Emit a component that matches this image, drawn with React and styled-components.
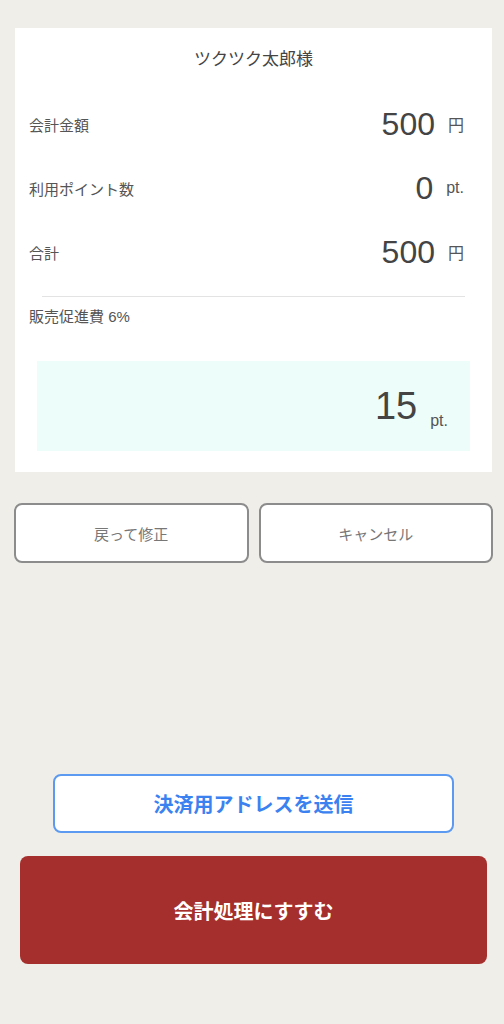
import React from 'react';
import styled, { createGlobalStyle } from 'styled-components';

const GlobalStyle = createGlobalStyle`
  html, body {
    margin: 0;
    padding: 0;
    background: #efeee9;
  }
  body {
    font-family: "Liberation Sans", "Noto Sans CJK JP", sans-serif;
    color: #444;
  }
`;

const rows = [
  { label: '会計金額', value: '500', unit: '円' },
  { label: '利用ポイント数', value: '0', unit: 'pt.' },
  { label: '合計', value: '500', unit: '円' }
];

const App = () => {
  return (
    <Page>
      <GlobalStyle />
      <Card>
        <Title>ツクツク太郎様</Title>
        {rows.map((row) => (
          <Row key={row.label}>
            <Label>{row.label}</Label>
            <Value>
              <Number>{row.value}</Number>
              <Unit>{row.unit}</Unit>
            </Value>
          </Row>
        ))}
        <Divider />
        <FeeLabel>販売促進費 6%</FeeLabel>
        <PointBox>
          <BigNumber>15</BigNumber>
          <SmallUnit>pt.</SmallUnit>
        </PointBox>
      </Card>
      <ButtonRow>
        <OutlineButton>戻って修正</OutlineButton>
        <OutlineButton>キャンセル</OutlineButton>
      </ButtonRow>
      <SendButton>決済用アドレスを送信</SendButton>
      <PrimaryButton>会計処理にすすむ</PrimaryButton>
    </Page>
  );
};
export default App;

const Page = styled.div`
  width: 504px;
  height: 1024px;
  box-sizing: border-box;
  padding: 28px 11px 0 14px;
  display: flex;
  flex-direction: column;
  overflow: hidden;
`;

const Card = styled.div`
  background: #fff;
  margin: 0 1px;
  padding: 0 0 21px;
  display: flex;
  flex-direction: column;
`;

const Title = styled.div`
  height: 64px;
  line-height: 64px;
  text-align: center;
  font-size: 17px;
  color: #444;
`;

const Row = styled.div`
  height: 64px;
  padding: 0 28px 0 14px;
  display: flex;
  align-items: center;
  justify-content: space-between;
`;

const Label = styled.span`
  font-size: 15px;
  color: #555;
`;

const Value = styled.span`
  display: flex;
  align-items: center;
`;

const Number = styled.span`
  font-size: 32px;
  line-height: 36px;
  color: #444;
`;

const Unit = styled.span`
  font-size: 16px;
  color: #555;
  margin-left: 13px;
`;

const Divider = styled.div`
  height: 1px;
  background: #e3e3e3;
  margin: 12px 27px 0;
`;

const FeeLabel = styled.div`
  font-size: 15px;
  line-height: 20px;
  color: #555;
  margin: 10px 14px 0;
`;

const PointBox = styled.div`
  background: #edfdf9;
  margin: 34px 22px 0;
  height: 90px;
  padding-right: 22px;
  display: flex;
  align-items: center;
  justify-content: flex-end;
`;

const BigNumber = styled.span`
  font-size: 38px;
  color: #444;
`;

const SmallUnit = styled.span`
  font-size: 16px;
  color: #555;
  margin-left: 13px;
  transform: translateY(15px);
`;

const ButtonRow = styled.div`
  margin-top: 31px;
  display: grid;
  grid-template-columns: 1fr 1fr;
  gap: 10px;
`;

const OutlineButton = styled.button`
  height: 60px;
  box-sizing: border-box;
  background: #fff;
  border: 2px solid #8c8c8c;
  border-radius: 8px;
  font-family: inherit;
  font-size: 15px;
  color: #777;
`;

const SendButton = styled.button`
  align-self: center;
  margin: 211px 0 0;
  width: 401px;
  height: 59px;
  box-sizing: border-box;
  background: #fff;
  border: 2px solid #5b9af0;
  border-radius: 8px;
  font-family: inherit;
  font-size: 20px;
  font-weight: bold;
  color: #3b82f0;
`;

const PrimaryButton = styled.button`
  margin: 23px 6px 0 6px;
  height: 108px;
  background: #a52f2c;
  border: none;
  border-radius: 8px;
  font-family: inherit;
  font-size: 20px;
  font-weight: bold;
  color: #fff;
`;
